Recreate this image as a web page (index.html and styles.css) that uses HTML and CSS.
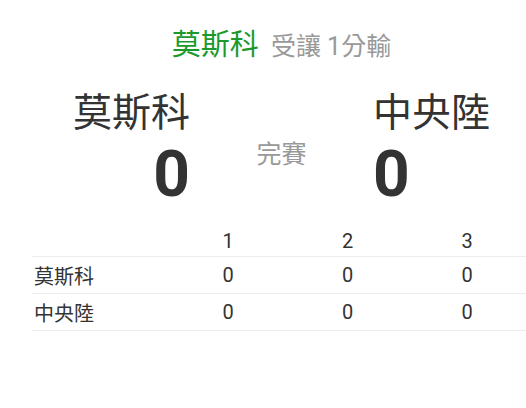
FILE: index.html
```html
<!DOCTYPE html>
<html lang="zh-Hant">
<head>
<meta charset="utf-8">
<link rel="stylesheet" href="styles.css">
</head>
<body>
<div class="wrap">
  <div class="title"><span class="fav">莫斯科</span><span class="hcp">受讓 1分輸</span></div>
  <div class="board">
    <div class="team left">
      <div class="tname">莫斯科</div>
      <div class="score">0</div>
    </div>
    <div class="status">完賽</div>
    <div class="team right">
      <div class="tname">中央陸</div>
      <div class="score">0</div>
    </div>
  </div>
  <table class="sets">
    <thead>
      <tr><th class="name"></th><th>1</th><th>2</th><th>3</th></tr>
    </thead>
    <tbody>
      <tr><td class="name">莫斯科</td><td>0</td><td>0</td><td>0</td></tr>
      <tr><td class="name">中央陸</td><td>0</td><td>0</td><td>0</td></tr>
    </tbody>
  </table>
</div>
</body>
</html>
```
FILE: styles.css
```css
html, body { margin: 0; padding: 0; overflow: hidden; background: #fff; }
body {
  font-family: Roboto, "Noto Sans CJK TC", sans-serif;
  color: #333;
}
.wrap {
  width: 499px;
  margin-left: 32px;
}
.title {
  text-align: center;
  padding-top: 25px;
  height: 40px;
  line-height: 40px;
}
.fav { color: #1b9a2b; font-size: 29px; }
.hcp { color: #999; font-size: 25px; margin-left: 12px; }
.board {
  display: grid;
  grid-template-columns: 1fr 183px 1fr;
  margin-top: 25px;
}
.team.left { text-align: right; }
.team.right { text-align: left; }
.tname { font-size: 39px; line-height: 46px; color: #333; }
.score { font-size: 64px; font-weight: 700; line-height: 62px; margin-top: 8px; color: #333; }
.status {
  text-align: center;
  color: #999;
  font-size: 25px;
  padding-top: 44px;
}
.sets {
  width: 495px;
  border-collapse: collapse;
  margin-top: 20px;
  font-size: 20px;
  color: #333;
}
.sets th, .sets td {
  width: 120px;
  text-align: center;
  font-weight: 400;
  padding: 0;
  height: 36px;
  border-bottom: 1px solid #ececec;
}
.sets th { height: 30px; vertical-align: middle; }
.sets .name { width: 135px; text-align: left; padding-left: 2px; }
```
